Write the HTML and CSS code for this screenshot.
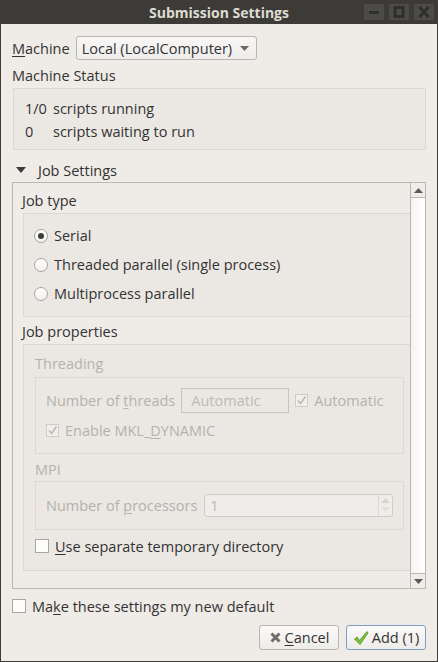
FILE: index.html
```html
<!DOCTYPE html>
<html lang="en">
<head>
<meta charset="UTF-8">
<meta name="viewport" content="width=device-width, initial-scale=1.0">
<title>Submission Settings</title>
<link rel="stylesheet" href="styles.css">
</head>
<body>

<div class="window">
    <div class="titlebar">
        <span class="title">Submission Settings</span>
        <div class="wm-buttons">
            <span class="wm-btn"><svg width="20" height="16" viewBox="0 0 20 16"><rect x="5" y="7" width="10" height="3" fill="#2e2e2c"/></svg></span>
            <span class="wm-btn"><svg width="20" height="16" viewBox="0 0 20 16"><rect x="6" y="3.5" width="8" height="9" fill="none" stroke="#2e2e2c" stroke-width="3"/></svg></span>
            <span class="wm-btn"><svg width="20" height="16" viewBox="0 0 20 16"><path d="M5.5 3 L14.5 13 M14.5 3 L5.5 13" stroke="#2e2e2c" stroke-width="3"/></svg></span>
        </div>
    </div>

    <div class="content">
        <div class="machine-row">
            <label><u>M</u>achine</label>
            <div class="combo">
                <span>Local (LocalComputer)</span>
                <svg width="9" height="5" viewBox="0 0 9 5"><path d="M0 0 L9 0 L4.5 5 Z" fill="#6b6a66"/></svg>
            </div>
        </div>

        <div class="section-label">Machine Status</div>
        <div class="status-frame">
            <div class="status-line"><span class="num">1/0</span><span>scripts running</span></div>
            <div class="status-line"><span class="num">0</span><span>scripts waiting to run</span></div>
        </div>

        <div class="expander">
            <svg width="10" height="6" viewBox="0 0 10 6"><path d="M0 0 L10 0 L5 6 Z" fill="#3c3c3c"/></svg>
            <span>Job Settings</span>
        </div>

        <div class="scroll-area">
            <div class="scroll-content">
                <div class="group-title">Job type</div>
                <div class="frame jobtype">
                    <div class="radio-row"><span class="radio checked"></span><span>Serial</span></div>
                    <div class="radio-row"><span class="radio"></span><span>Threaded parallel (single process)</span></div>
                    <div class="radio-row"><span class="radio"></span><span>Multiprocess parallel</span></div>
                </div>

                <div class="group-title">Job properties</div>
                <div class="frame jobprops">
                    <div class="sub-title disabled">Threading</div>
                    <div class="inner-frame threading">
                        <div class="field-row">
                            <span class="disabled">Number of <u>t</u>hreads</span>
                            <span class="line-edit">Automatic</span>
                            <span class="check dis-check"><svg width="11" height="11" viewBox="0 0 11 11"><path d="M2 5.5 L4.5 8.5 L9.5 1.5" fill="none" stroke="#bdb9b4" stroke-width="1.6"/></svg></span>
                            <span class="disabled">Automatic</span>
                        </div>
                        <div class="field-row mkl">
                            <span class="check dis-check"><svg width="11" height="11" viewBox="0 0 11 11"><path d="M2 5.5 L4.5 8.5 L9.5 1.5" fill="none" stroke="#bdb9b4" stroke-width="1.6"/></svg></span>
                            <span class="disabled">Enable MKL_<u>D</u>YNAMIC</span>
                        </div>
                    </div>

                    <div class="sub-title disabled mpi-title">MPI</div>
                    <div class="inner-frame mpi">
                        <div class="field-row">
                            <span class="disabled">Number of <u>p</u>rocessors</span>
                            <div class="spinbox">
                                <span class="spin-value">1</span>
                                <span class="spin-buttons">
                                    <svg width="9" height="5" viewBox="0 0 9 5"><path d="M0 5 L9 5 L4.5 0 Z" fill="#d8d5d0"/></svg>
                                    <svg width="9" height="5" viewBox="0 0 9 5"><path d="M0 0 L9 0 L4.5 5 Z" fill="#e2dfdb"/></svg>
                                </span>
                            </div>
                        </div>
                    </div>

                    <div class="check-row temp-row">
                        <span class="check"></span>
                        <span><u>U</u>se separate temporary directory</span>
                    </div>
                </div>
            </div>
            <div class="scrollbar">
                <span class="arrow up"><svg width="9" height="5" viewBox="0 0 9 5"><path d="M0 5 L9 5 L4.5 0 Z" fill="#5b5a57"/></svg></span>
                <span class="track"></span>
                <span class="arrow down"><svg width="9" height="5" viewBox="0 0 9 5"><path d="M0 0 L9 0 L4.5 5 Z" fill="#5b5a57"/></svg></span>
            </div>
        </div>

        <div class="check-row default-row">
            <span class="check"></span>
            <span>Ma<u>k</u>e these settings my new default</span>
        </div>

        <div class="button-row">
            <button class="btn">
                <svg width="13" height="13" viewBox="0 0 13 13"><path d="M2.5 2.5 L10.5 10.5 M10.5 2.5 L2.5 10.5" stroke="#6e6d6a" stroke-width="3"/></svg>
                <span><u>C</u>ancel</span>
            </button>
            <button class="btn default">
                <svg width="16" height="16" viewBox="0 0 16 16"><path d="M1.5 9 L4 7 L6.5 10.5 L14 1.5 L15 3 L7 14.5 Z" fill="#7cc33b" stroke="#4f8f1c" stroke-width="0.8"/></svg>
                <span>Add (1)</span>
            </button>
        </div>
    </div>
</div>

</body>
</html>
```

FILE: styles.css
```css
body {
    margin: 0;
    padding: 0;
    font-family: "Open Sans", "Noto Sans", sans-serif;
    font-size: 14.5px;
    color: #333333;
}

u {
    text-decoration: underline;
    text-underline-offset: 2px;
}

.window {
    width: 438px;
    height: 662px;
    box-sizing: border-box;
    background-color: #efebe7;
    border: 1px solid #3c3b37;
    border-top: none;
    display: flex;
    flex-direction: column;
}

.titlebar {
    height: 24px;
    background-color: #3c3b37;
    position: relative;
    display: flex;
    align-items: center;
    justify-content: center;
    margin: 0 -1px;
}

.title {
    color: #dfdbd2;
    font-weight: bold;
    font-size: 14px;
}

.wm-buttons {
    position: absolute;
    right: 4px;
    top: 4px;
    display: flex;
    gap: 5px;
}

.wm-btn {
    width: 20px;
    height: 16px;
    background-color: #4c4b47;
    display: block;
}

.wm-btn svg {
    display: block;
}

.content {
    flex: 1;
    padding: 12px 11px 0 11px;
    display: flex;
    flex-direction: column;
}

.machine-row {
    display: flex;
    align-items: center;
    gap: 6px;
    height: 24px;
}

.combo {
    width: 181px;
    height: 24px;
    box-sizing: border-box;
    border: 1px solid #b9b5b0;
    border-radius: 3px;
    background: linear-gradient(#f8f7f6, #efedeb);
    display: flex;
    align-items: center;
    justify-content: space-between;
    padding: 0 7px 0 5px;
}

.section-label {
    margin-top: 7px;
    height: 18px;
    line-height: 18px;
}

.status-frame {
    margin-top: 3px;
    margin-left: 1px;
    height: 62px;
    box-sizing: border-box;
    border: 1px solid #dcd8d3;
    background-color: #ebe8e4;
    padding: 8px 11px;
}

.status-line {
    display: flex;
    height: 23px;
    line-height: 23px;
}

.status-line .num {
    width: 28px;
}

.expander {
    margin-top: 10px;
    height: 20px;
    display: flex;
    align-items: center;
    gap: 12px;
    padding-left: 4px;
}

.scroll-area {
    margin-top: 2px;
    height: 407px;
    box-sizing: border-box;
    border: 1px solid #bbb7b2;
    display: flex;
    overflow: hidden;
}

.scroll-content {
    flex: 1;
    padding: 8px 0 0 9px;
    min-width: 0;
}

.group-title {
    height: 20px;
    line-height: 20px;
}

.frame {
    margin: 2px 0 0 1px;
    border: 1px solid #dcd8d3;
    border-right: none;
    background-color: #ebe8e4;
    box-sizing: border-box;
}

.jobtype {
    height: 104px;
    padding: 7px 0 0 10px;
    margin-bottom: 5px;
}

.radio-row {
    display: flex;
    align-items: center;
    height: 29px;
    gap: 6px;
}

.radio {
    width: 12px;
    height: 12px;
    border-radius: 50%;
    border: 1px solid #a8a5a0;
    background: linear-gradient(#ffffff, #f1f0ee);
    position: relative;
}

.radio.checked::after {
    content: "";
    position: absolute;
    left: 3px;
    top: 3px;
    width: 6px;
    height: 6px;
    border-radius: 50%;
    background-color: #3c3c3c;
}

.jobprops {
    height: 227px;
    padding: 9px 0 0 11px;
}

.disabled {
    color: #b5b1ac;
}

.sub-title {
    height: 20px;
    line-height: 20px;
}

.inner-frame {
    margin-top: 3px;
    width: 369px;
    box-sizing: border-box;
    border: 1px solid #dcd8d3;
    padding: 0 0 0 10px;
}

.threading {
    height: 77px;
    padding-top: 10px;
    margin-bottom: 6px;
}

.mpi-title {
    margin-top: 0;
}

.mpi {
    margin-top: 1px;
    height: 49px;
    padding-top: 11px;
}

.field-row {
    display: flex;
    align-items: center;
    height: 24px;
}

.line-edit {
    margin-left: 6px;
    width: 108px;
    height: 25px;
    box-sizing: border-box;
    border: 1px solid #c8c5c0;
    color: #bdb9b4;
    padding-left: 9px;
    line-height: 23px;
    margin-right: 6px;
}

.check {
    width: 13px;
    height: 13px;
    box-sizing: border-box;
    border: 1px solid #aaa6a1;
    background-color: #fdfdfc;
    display: inline-flex;
    align-items: center;
    justify-content: center;
    margin-right: 6px;
    flex: none;
}

.dis-check {
    border-color: #cfcbc6;
    background-color: #f1efec;
}

.mkl {
    margin-top: 6px;
}

.spinbox {
    margin-left: 7px;
    width: 189px;
    height: 23px;
    box-sizing: border-box;
    border: 1px solid #cfcbc6;
    border-radius: 3px;
    display: flex;
    background-color: #efedea;
}

.spin-value {
    flex: 1;
    color: #bdb9b4;
    padding-left: 5px;
    line-height: 21px;
}

.spin-buttons {
    width: 13px;
    border-left: 1px solid #dcd8d3;
    display: flex;
    flex-direction: column;
    align-items: center;
    justify-content: space-around;
    padding: 2px 0;
}

.check-row {
    display: flex;
    align-items: center;
    height: 20px;
}

.check-row .check {
    width: 14px;
    height: 14px;
    margin-right: 6px;
}

.temp-row {
    margin-top: 6px;
}

.scrollbar {
    width: 14px;
    border-left: 1px solid #bbb7b2;
    display: flex;
    flex-direction: column;
    background: linear-gradient(90deg, #f5f4f2, #ffffff);
}

.arrow {
    height: 14px;
    display: flex;
    align-items: center;
    justify-content: center;
    background-color: #efedea;
}

.arrow.up {
    border-bottom: 1px solid #bbb7b2;
}

.arrow.down {
    border-top: 1px solid #bbb7b2;
}

.track {
    flex: 1;
}

.default-row {
    margin-top: 7px;
}

.button-row {
    display: flex;
    justify-content: flex-end;
    gap: 7px;
    margin-top: 9px;
}

.btn {
    width: 80px;
    height: 25px;
    box-sizing: border-box;
    border: 1px solid #b9b5b0;
    border-radius: 3px;
    background: linear-gradient(#fbfaf9, #eeece9);
    font-family: inherit;
    font-size: 14.5px;
    color: #333333;
    display: flex;
    align-items: center;
    justify-content: center;
    gap: 3px;
    padding: 0;
}

.btn.default {
    border-color: #7f9fc2;
}
```
